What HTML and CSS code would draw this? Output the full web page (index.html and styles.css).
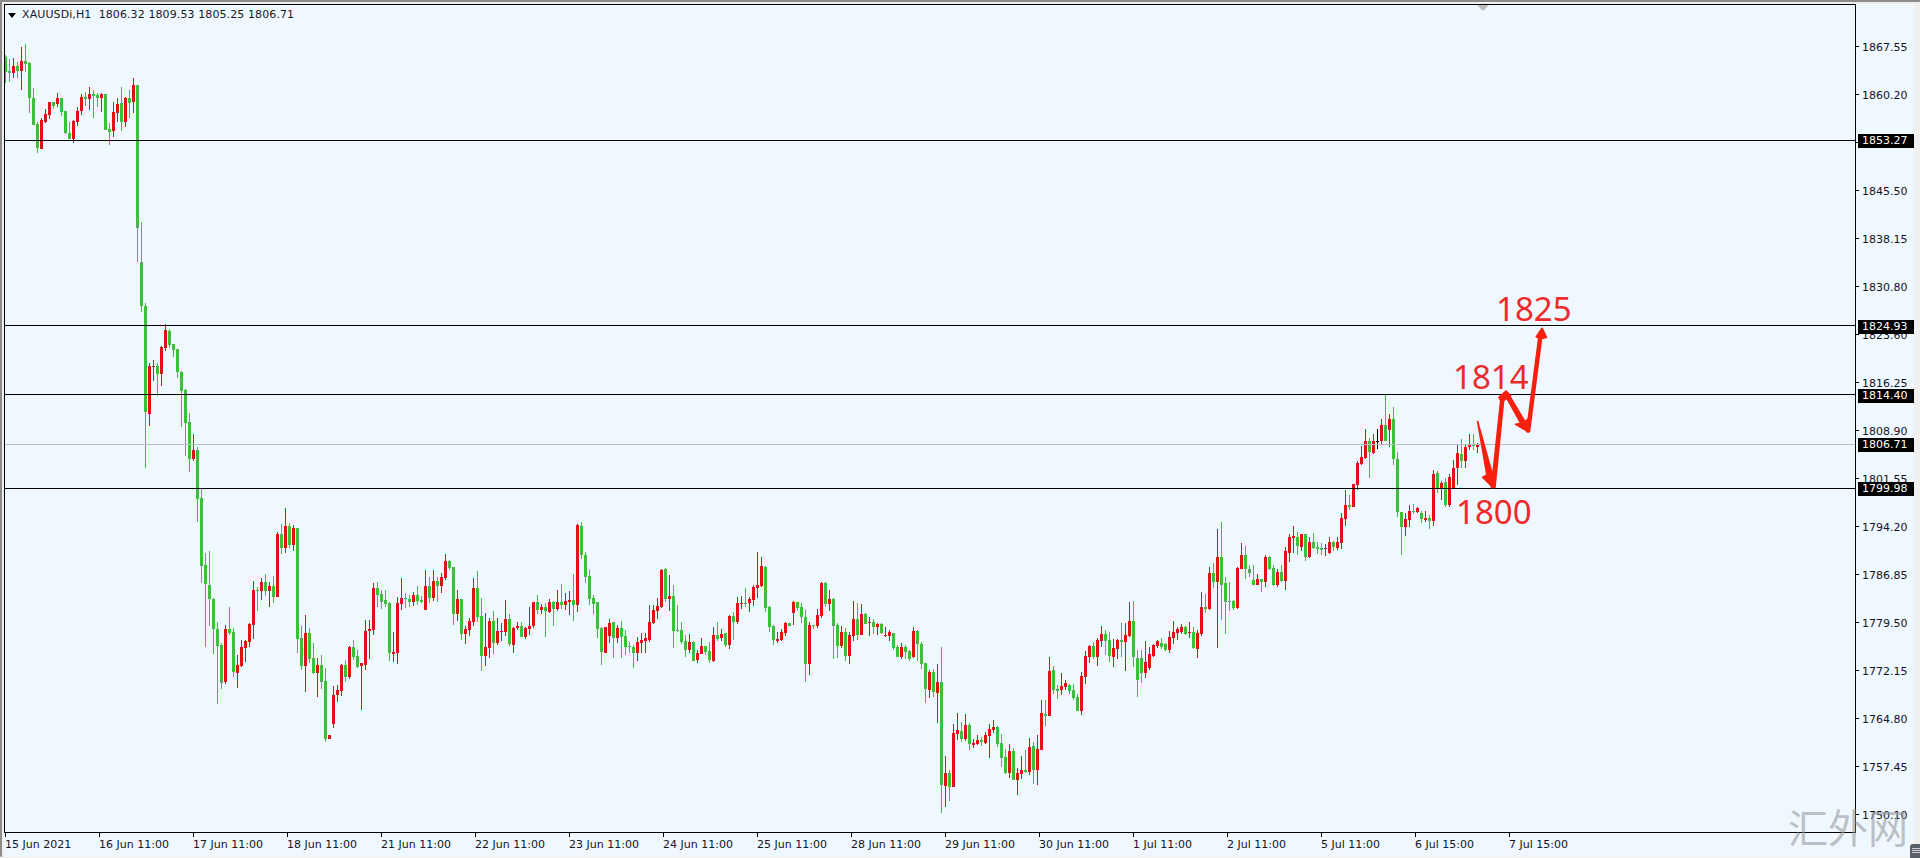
FILE: index.html
```html
<!DOCTYPE html>
<html lang="en">
<head>
<meta charset="utf-8">
<title>XAUUSDi,H1</title>
<link rel="stylesheet" href="styles.css">
</head>
<body>
<div class="terminal">
  <div class="chart">
    <div class="plot">
      <svg class="canvas" viewBox="5 5 1850 827" width="1850" height="827" xmlns="http://www.w3.org/2000/svg">
        <g id="candles"></g>
        <rect class="level" x="5" y="140" width="1850" height="1"/>
        <rect class="level" x="5" y="325" width="1850" height="1"/>
        <rect class="level" x="5" y="394" width="1850" height="1"/>
        <rect class="level-bid" x="5" y="444" width="1850" height="1"/>
        <rect class="level" x="5" y="488" width="1850" height="1"/>
        <g class="arrows" transform="translate(1380 280) scale(0.34507 0.33333)">
          <polygon points="283,425 322,570 330,590 325,620 298,592 310,585"/>
          <polygon points="323,622 333,622 358,362 378,347 365,333 345,352 350,362"/>
          <polygon points="360,340 372,342 420,425 428,418 430,455 393,433 408,430"/>
          <polygon points="425,455 433,455 468,175 482,172 470,145 453,170 460,175"/>
        </g>
      </svg>
      <div class="legend"><span class="legend-arrow"></span><span>XAUUSDi,H1&nbsp;&nbsp;1806.32 1809.53 1805.25 1806.71</span></div>
      <span class="note note-1825">1825</span>
      <span class="note note-1814">1814</span>
      <span class="note note-1800">1800</span>
      <span class="shift-mark"></span>
    </div>
    <div class="price-axis">
      <div class="tick">1867.55</div>
      <div class="tick">1860.20</div>
      <div class="tick">1852.85</div>
      <div class="tick">1845.50</div>
      <div class="tick">1838.15</div>
      <div class="tick">1830.80</div>
      <div class="tick">1823.60</div>
      <div class="tick">1816.25</div>
      <div class="tick">1808.90</div>
      <div class="tick">1801.55</div>
      <div class="tick">1794.20</div>
      <div class="tick">1786.85</div>
      <div class="tick">1779.50</div>
      <div class="tick">1772.15</div>
      <div class="tick">1764.80</div>
      <div class="tick">1757.45</div>
      <div class="tick">1750.10</div>
      <span class="tag tag-a">1853.27</span>
      <span class="tag tag-b">1824.93</span>
      <span class="tag tag-c">1814.40</span>
      <span class="tag tag-d">1806.71</span>
      <span class="tag tag-e">1799.98</span>
    </div>
    <div class="time-axis">
      <span class="stamp">15 Jun 2021</span>
      <span class="stamp">16 Jun 11:00</span>
      <span class="stamp">17 Jun 11:00</span>
      <span class="stamp">18 Jun 11:00</span>
      <span class="stamp">21 Jun 11:00</span>
      <span class="stamp">22 Jun 11:00</span>
      <span class="stamp">23 Jun 11:00</span>
      <span class="stamp">24 Jun 11:00</span>
      <span class="stamp">25 Jun 11:00</span>
      <span class="stamp">28 Jun 11:00</span>
      <span class="stamp">29 Jun 11:00</span>
      <span class="stamp">30 Jun 11:00</span>
      <span class="stamp">1 Jul 11:00</span>
      <span class="stamp">2 Jul 11:00</span>
      <span class="stamp">5 Jul 11:00</span>
      <span class="stamp">6 Jul 15:00</span>
      <span class="stamp">7 Jul 15:00</span>
    </div>
  </div>
  <div class="watermark">汇外网</div>
  <div class="corner-icon"><span></span><span></span><span></span></div>
</div>
<script src="chart.js"></script>
</body>
</html>
```
FILE: styles.css
```css
* { box-sizing: border-box; }
html, body { margin: 0; padding: 0; }
body {
  width: 1920px;
  height: 858px;
  overflow: hidden;
  background: #f0f0f0;
  font-family: "DejaVu Sans", Tahoma, sans-serif;
  font-size: 11px;
  color: #10141c;
}
.terminal {
  position: relative;
  width: 1920px;
  height: 857px;
  padding: 2px 0 0 2px;
  border-top: 2px solid #8c8c8c;
  border-left: 2px solid #8c8c8c;
  border-bottom: 1px solid #dcdcdc;
}
.chart {
  display: grid;
  grid-template-columns: 1852px 58px;
  grid-template-rows: 829px 24px;
  width: 1910px;
  background: #f0f8ff;
}
.plot {
  position: relative;
  overflow: hidden;
  border: 1px solid #000;
  background: #f0f8ff;
}
.canvas { position: absolute; left: 0; top: 0; display: block; }
.level { fill: #000; }
.level-bid { fill: #b9bdc1; }
.arrows polygon { fill: #f7200f; stroke: #f7200f; stroke-width: 5; stroke-linejoin: round; }
.body-g, .wick-g { fill: #3cc03c; }
.body-r, .wick-r { fill: #e01218; }
.body-k, .wick-k { fill: #000; }

.legend {
  position: absolute;
  left: 3px;
  top: 3px;
  display: flex;
  align-items: center;
  gap: 6px;
  height: 14px;
  line-height: 14px;
  letter-spacing: 0.1px;
  white-space: nowrap;
  color: #14181f;
}
.legend-arrow {
  width: 0;
  height: 0;
  border-left: 4.5px solid transparent;
  border-right: 4.5px solid transparent;
  border-top: 5px solid #000;
}
.note {
  position: absolute;
  font-family: "Noto Sans", sans-serif;
  font-size: 33px;
  line-height: 33px;
  color: #ee2a2a;
}
.note-1825 { left: 1491px; top: 287px; }
.note-1814 { left: 1448px; top: 355px; }
.note-1800 { left: 1451px; top: 490px; }
.shift-mark {
  position: absolute;
  left: 1472px;
  top: 0;
  width: 12px;
  height: 6px;
  background: #bdbdbd;
  clip-path: polygon(0 0, 100% 0, 50% 100%);
}

.price-axis {
  position: relative;
  padding-top: 18px;
}
.tick {
  position: relative;
  height: 48px;
  line-height: 51px;
  padding-left: 6px;
  white-space: nowrap;
}
.tick::before {
  content: "";
  position: absolute;
  left: 0;
  top: 24px;
  width: 3px;
  height: 1px;
  background: #000;
}
.tag {
  position: absolute;
  left: 2px;
  width: 56px;
  height: 14px;
  padding-left: 4px;
  line-height: 14px;
  background: #000;
  color: #fff;
  white-space: nowrap;
}
.tag-a { top: 130px; }
.tag-b { top: 316px; }
.tag-c { top: 385px; }
.tag-d { top: 434px; }
.tag-e { top: 478px; }

.time-axis {
  grid-column: 1 / span 2;
  display: flex;
  padding-left: 1px;
  height: 24px;
}
.stamp {
  position: relative;
  flex: 0 0 94px;
  padding-top: 5px;
  line-height: 14px;
  white-space: nowrap;
}
.stamp::before {
  content: "";
  position: absolute;
  left: 0;
  top: 0;
  width: 1px;
  height: 4px;
  background: #000;
}

.watermark {
  position: absolute;
  left: 1786px;
  top: 802px;
  font-family: "Noto Sans CJK SC", sans-serif;
  font-size: 40px;
  line-height: 44px;
  color: rgba(150, 155, 158, 0.6);
  white-space: nowrap;
}
.corner-icon {
  position: absolute;
  left: 1908px;
  top: 842px;
  width: 12px;
  height: 14px;
  padding: 4px 2px 0;
  border-radius: 3px 0 0 0;
  background: #5a6068;
  display: flex;
  flex-direction: column;
  gap: 1px;
}
.corner-icon span { display: block; height: 1px; background: #cfd3d8; }
```
FILE: chart.js
```js
// Candle data: [originX, originY, firstCentreX, "colour high,top,bottom,low" ...]
// Values are 3x-scaled offsets from the origin.
var GROUPS = [
  [0, 0, 5, "g165,170,215,250 g178,213,218,245 r175,197,218,235 g185,198,213,235 r140,183,213,270 g132,183,192,215 g185,188,295,340 g265,295,375,375 g365,372,445,458 r355,360,447,447 r328,342,365,370 r305,306,345,358 g305,306,318,328 r278,295,312,322 g295,295,335,348 g332,332,400,402 g365,400,418,418 r360,363,417,428 r322,333,365,378 r282,290,333,345 g275,290,296,318 r262,282,296,330 g270,282,288,355 g280,285,293,320 r278,282,293,335 g282,282,390,390 g370,388,395,435 r305,336,392,410 r295,312,340,365 g260,308,365,392 r290,293,365,382 g270,295,308,355 r235,255,305,338 g255,255,684,786 g666,786,918,936"],
  [120, 300, 145, "g10,18,335,503 r190,198,342,378 r180,197,200,243 g190,198,222,288 r138,140,222,258 r72,90,145,152 g87,93,135,145 g132,132,150,172 g147,147,215,235 g213,216,274,380 g268,270,370,468 g340,366,476,516 r402,450,476,483 g440,450,597,666 g565,595,798,849"],
  [180, 500, 205, "g160,195,253,440 g152,255,298,378 g295,296,388,462 g365,388,437,612 g430,434,548,568 r376,388,546,552 g320,388,400,405 g385,396,516,530 r465,496,518,565 r420,442,498,502 r420,424,444,487 r368,373,426,440 r243,270,375,416 g262,270,273,333 r235,247,272,300 g222,247,273,288 r247,258,273,320 g228,258,290,308 r95,101,290,290 g72,101,144,162 r24,78,144,158 g68,78,136,144 r75,84,135,152 g83,84,416,460 g378,414,498,510 r345,400,498,575 g385,400,476,490 g430,474,520,522 r475,496,518,590 g465,496,546,567 g505,544,716,725 r704,706,716,718 r558,585,672,684 r556,570,585,606 r492,494,572,588 g480,496,532,545 r438,440,530,536 g420,442,472,480 g450,468,500,505 r488,490,497,630 r360,393,495,510 r360,388,393,476 r250,264,390,405 g245,264,284,322 g270,282,306,328 g270,300,312,322 g305,308,458,483 r395,456,462,487 r290,309,458,491 r235,294,312,330 g280,294,298,324 g285,296,306,320 r275,285,306,318 g258,286,303,315 g288,300,305,310 r210,258,330,330 g232,258,294,310 r210,243,294,303 g230,243,258,305 r218,232,258,278 r162,183,234,240 g180,182,205,210 g200,201,342,375 r270,297,342,363 g296,297,402,420 r378,386,402,432 r355,363,390,408 r234,264,365,378"],
  [470, 510, 477, "g183,234,320,335 g265,318,437,482 r310,412,437,468 r325,333,414,445 g302,333,400,432 r325,363,398,405 r340,363,365,392 r270,327,365,378 g312,327,402,408 r352,354,404,428 r337,348,353,360 g335,348,380,382 r350,353,382,386 r292,348,356,375 r276,277,348,355 g254,277,300,312 r282,292,300,312 g278,290,304,382 r268,276,306,310 g272,276,296,348 r240,276,298,302 g222,276,285,298 r250,274,285,300 r242,270,275,315 g192,270,285,332 r42,46,285,305 g36,47,136,148 g125,136,200,218 g180,198,266,285 g255,264,282,312 g276,277,356,385 g352,354,426,465 r350,352,428,430 r326,340,378,398 g335,336,384,445 r345,354,384,400 g332,354,381,445 g360,378,410,435 g395,408,412,430 g405,412,428,473 r382,396,428,452 r368,390,398,430 r368,384,392,430 r286,336,390,395 r285,300,338,342 r265,288,302,326 r178,179,290,295 g175,178,266,275 r195,258,266,302 g225,258,362,413 g285,360,363,365 g335,360,395,402 g375,392,420,442 r372,396,420,430 g394,395,452,452 r420,428,450,458 r385,408,432,432 g407,408,426,436 g395,422,450,458 r350,376,452,456 g335,376,386,392 r358,372,384,392 g368,370,406,412 r316,317,404,416 g307,318,336,390 r262,279,336,342 r258,279,282,298 g235,279,281,290 r262,267,280,305 r225,230,270,288 r126,226,233,265 r142,168,228,232 g168,170,294,305 g288,291,350,365 g345,348,390,405 r365,388,392,398 r358,365,390,392 r335,339,368,378 g339,339,347,347 r272,276,308,345 g275,277,293,302 g280,292,320,338 g300,322,462,515 r335,345,462,495 g345,345,347,358 r298,316,348,355 r216,218,318,325 g216,218,282,290 r240,267,282,303 g265,266,348,448 g340,345,408,445 r348,366,408,414 g355,366,438,452 r365,376,438,462 r274,328,378,392 g278,328,376,390 r282,312,375,375 g308,312,342,342 r320,336,340,378 g328,336,352,372 r340,342,352,376 g340,342,370,372 r352,375,378,382 r360,365,378,392 g368,369,413,420 g405,412,441,441 r400,412,442,448 g405,411,426,448 g420,422,446,452"],
  [900, 600, 913, "r82,93,172,175 g90,92,132,182 g125,132,192,208 g190,190,268,308 r210,215,270,293 g206,216,276,290 r192,246,280,368 g140,246,556,638 r468,519,558,622 g510,519,560,604 r372,400,560,560 r340,390,402,420 g365,392,416,425 r342,375,418,424 g370,375,432,450 r416,430,434,444 r405,420,432,436 g410,420,425,438 r395,406,428,432 r372,388,407,473 r360,380,390,400 g378,380,433,440 g402,430,473,502 g448,472,520,522 r432,453,520,534 g445,453,540,540 r505,519,540,585 r468,510,522,537 g450,510,515,520 r414,441,516,525 g425,438,510,552 r405,447,510,555 r300,339,449,450 g300,342,347,378 r172,212,347,348 g198,210,270,282 g255,266,272,296 r220,258,270,285 r240,249,262,270 g252,254,272,282 g252,270,294,300 g282,290,332,333 r216,228,332,344 r152,168,232,252 r136,138,172,188 g125,138,172,178 r114,120,172,198 r78,102,122,140 g90,102,122,165 g95,120,168,185 r118,145,170,200 r118,121,147,178 g68,120,125,170 r70,105,125,212 r6,64,107,112 g4,64,172,200 g150,174,240,290"],
  [1130, 420, 1141, "g690,715,760,790 r664,725,760,775 r682,702,745,750 r672,676,708,712 r660,662,678,683 g655,668,680,686 g668,672,690,694 r632,652,690,698 r604,636,654,672 r622,628,640,660 r612,621,637,642 g618,620,642,646 r606,636,640,654 g622,636,684,686 r630,638,688,714 r517,561,642,648 g522,561,567,578 r442,458,568,570 g430,458,486,504 r328,410,486,684 g305,410,494,600 g472,490,546,642 g486,543,547,572 g540,542,564,570 r440,444,564,566 r368,404,446,448 g378,404,446,476 g435,447,458,472 g435,480,494,496 r462,476,494,496 g476,477,485,515 r405,412,486,502 g408,412,446,450 g434,443,496,498 r447,457,496,502 g436,456,484,486 r380,392,484,510 r342,350,398,425 r318,348,354,400 g337,350,378,405 r342,342,380,392 g342,342,412,424 r350,365,412,415 g340,365,384,386 g365,380,386,402 g370,384,390,405 r372,384,388,408 r352,365,400,402 g364,365,382,392 r352,366,384,390 r280,294,370,386 r210,254,296,318 g225,256,260,270 r192,193,260,262 r124,128,194,210 r78,110,132,134 r28,64,114,116 g55,64,96,175 r42,64,100,102 k28,64,66,88"],
  [1360, 400, 1381, "r58,76,124,135 g-15,76,122,122 r42,58,90,142 g20,58,178,195 g155,178,335,352 g335,335,380,465 r340,357,380,407 r315,332,360,380 g313,333,337,342 r320,324,337,340 g332,338,358,368 r333,354,360,365 g345,355,362,388 r210,222,362,378 g214,218,268,280 r242,248,268,300 g235,246,314,320 r222,232,316,320 r180,204,264,265 r135,160,205,255 g117,162,182,205 r135,140,182,205 r102,136,142,150 g102,134,139,150 r130,132,140,160"]
];

(function () {
  var html = "";
  GROUPS.forEach(function (group) {
    var ox = group[0], oy = group[1], cx = group[2];
    group[3].split(" ").forEach(function (item) {
      var colour = item.charAt(0);
      var v = item.slice(1).split(",").map(function (n) {
        return Math.round(oy + Number(n) / 3);
      });
      var high = v[0], top = v[1], bottom = v[2], low = v[3];
      var bodyH = Math.max(1, bottom - top);
      html += '<rect class="wick-' + colour + '" x="' + cx + '" y="' + high +
        '" width="1" height="' + Math.max(1, low - high) + '"/>';
      if (colour === "k") {
        html += '<rect class="body-k" x="' + (cx - 1) + '" y="' + top + '" width="3" height="1"/>';
      } else {
        html += '<rect class="body-' + colour + '" x="' + (cx - 1) + '" y="' + top +
          '" width="3" height="' + bodyH + '"/>';
      }
      cx += 4;
    });
  });
  document.getElementById("candles").innerHTML = html;
})();
```
